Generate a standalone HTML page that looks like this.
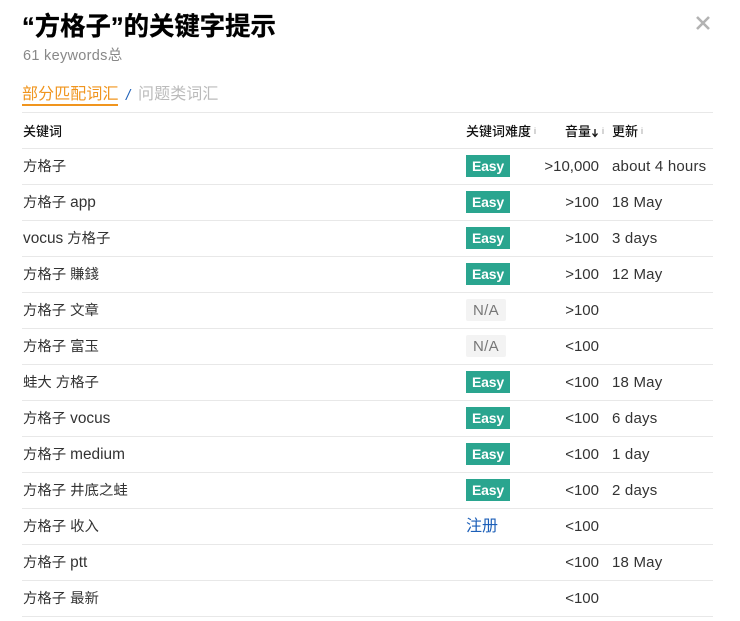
<!DOCTYPE html>
<html><head><meta charset="utf-8"><style>
html,body{margin:0;padding:0;background:#fff}
body{width:740px;height:621px;position:relative;overflow:hidden;font-family:"Liberation Sans","Noto Sans CJK SC",sans-serif;color:#333;font-size:15px}
div{position:absolute;white-space:nowrap}
.l{left:22px;width:691px;height:1px;background:#e8e8e8}
.k{left:23px;line-height:22px;font-size:14.4px}
.k span{font-size:15.4px}
.v{right:141px;line-height:22px;letter-spacing:0}
.u{left:612px;line-height:22px;letter-spacing:.2px}
.e{left:466px;width:44px;height:22px;background:#2aa58f;color:#fff;font-size:14px;font-weight:700;text-align:center;line-height:22px;letter-spacing:-.2px}
.n{left:466px;width:40px;height:22px;background:#f3f3f3;color:#777;font-size:15px;text-align:center;line-height:24px;border-radius:2px;letter-spacing:.3px}
.h{top:122px;font-size:13px;line-height:20px;color:#111;font-weight:500}
.i{top:125px;font-size:9px;line-height:12px;color:#999}
</style></head><body>
<div style="left:22px;top:10px;font-size:25.4px;line-height:34px;font-weight:700;color:#000;-webkit-text-stroke:.3px #000">“方格子”的关键字提示</div>
<div style="left:23px;top:46px;font-size:14.5px;line-height:20px;color:#888;letter-spacing:.3px">61 keywords总</div>
<svg style="position:absolute;left:695px;top:15px" width="16" height="16" viewBox="0 0 16 16"><path d="M2 2L14 14M14 2L2 14" stroke="#b3b3b3" stroke-width="2.6" fill="none"/></svg>
<div style="left:22px;top:84px;font-size:16px;line-height:22px;color:#f0951e;letter-spacing:.1px">部分匹配词汇</div>
<div style="left:22px;top:104px;width:96px;height:2px;background:#f0951e"></div>
<div style="left:126px;top:85px;font-size:15px;line-height:22px;color:#1c5fb8;font-style:italic">/</div>
<div style="left:138px;top:84px;font-size:16px;line-height:22px;color:#bbb;letter-spacing:.1px">问题类词汇</div>

<div class="l" style="top:112px"></div><div class="l" style="top:148px"></div><div class="l" style="top:184px"></div><div class="l" style="top:220px"></div><div class="l" style="top:256px"></div><div class="l" style="top:292px"></div><div class="l" style="top:328px"></div><div class="l" style="top:364px"></div><div class="l" style="top:400px"></div><div class="l" style="top:436px"></div><div class="l" style="top:472px"></div><div class="l" style="top:508px"></div><div class="l" style="top:544px"></div><div class="l" style="top:580px"></div><div class="l" style="top:616px"></div>

<div class="h" style="left:23px">关键词</div>
<div class="h" style="left:466px">关键词难度</div><div class="i" style="left:534px">i</div>
<div class="h" style="left:565px">音量</div>
<svg style="position:absolute;left:591px;top:128px" width="8" height="10" viewBox="0 0 8 10"><path d="M4 1V8M1.5 5.5L4 8.5L6.5 5.5" stroke="#111" stroke-width="1.3" fill="none"/></svg>
<div class="i" style="left:602px">i</div>
<div class="h" style="left:612px">更新</div><div class="i" style="left:641px">i</div>

<div class="k" style="top:156px">方格子</div><div class="e" style="top:155px">Easy</div><div class="v" style="top:156px">&gt;10,000</div><div class="u" style="top:156px">about 4 hours</div>
<div class="k" style="top:192px">方格子 <span>app</span></div><div class="e" style="top:191px">Easy</div><div class="v" style="top:192px">&gt;100</div><div class="u" style="top:192px">18 May</div>
<div class="k" style="top:228px"><span>vocus</span> 方格子</div><div class="e" style="top:227px">Easy</div><div class="v" style="top:228px">&gt;100</div><div class="u" style="top:228px">3 days</div>
<div class="k" style="top:264px">方格子 賺錢</div><div class="e" style="top:263px">Easy</div><div class="v" style="top:264px">&gt;100</div><div class="u" style="top:264px">12 May</div>
<div class="k" style="top:300px">方格子 文章</div><div class="n" style="top:299px">N/A</div><div class="v" style="top:300px">&gt;100</div>
<div class="k" style="top:336px">方格子 富玉</div><div class="n" style="top:335px">N/A</div><div class="v" style="top:336px">&lt;100</div>
<div class="k" style="top:372px">蛙大 方格子</div><div class="e" style="top:371px">Easy</div><div class="v" style="top:372px">&lt;100</div><div class="u" style="top:372px">18 May</div>
<div class="k" style="top:408px">方格子 <span>vocus</span></div><div class="e" style="top:407px">Easy</div><div class="v" style="top:408px">&lt;100</div><div class="u" style="top:408px">6 days</div>
<div class="k" style="top:444px">方格子 <span>medium</span></div><div class="e" style="top:443px">Easy</div><div class="v" style="top:444px">&lt;100</div><div class="u" style="top:444px">1 day</div>
<div class="k" style="top:480px">方格子 井底之蛙</div><div class="e" style="top:479px">Easy</div><div class="v" style="top:480px">&lt;100</div><div class="u" style="top:480px">2 days</div>
<div class="k" style="top:516px">方格子 收入</div><div style="left:466px;top:517px;line-height:20px;font-size:16px;color:#1c5fb8">注册</div><div class="v" style="top:516px">&lt;100</div>
<div class="k" style="top:552px">方格子 <span>ptt</span></div><div class="v" style="top:552px">&lt;100</div><div class="u" style="top:552px">18 May</div>
<div class="k" style="top:588px">方格子 最新</div><div class="v" style="top:588px">&lt;100</div>
</body></html>
